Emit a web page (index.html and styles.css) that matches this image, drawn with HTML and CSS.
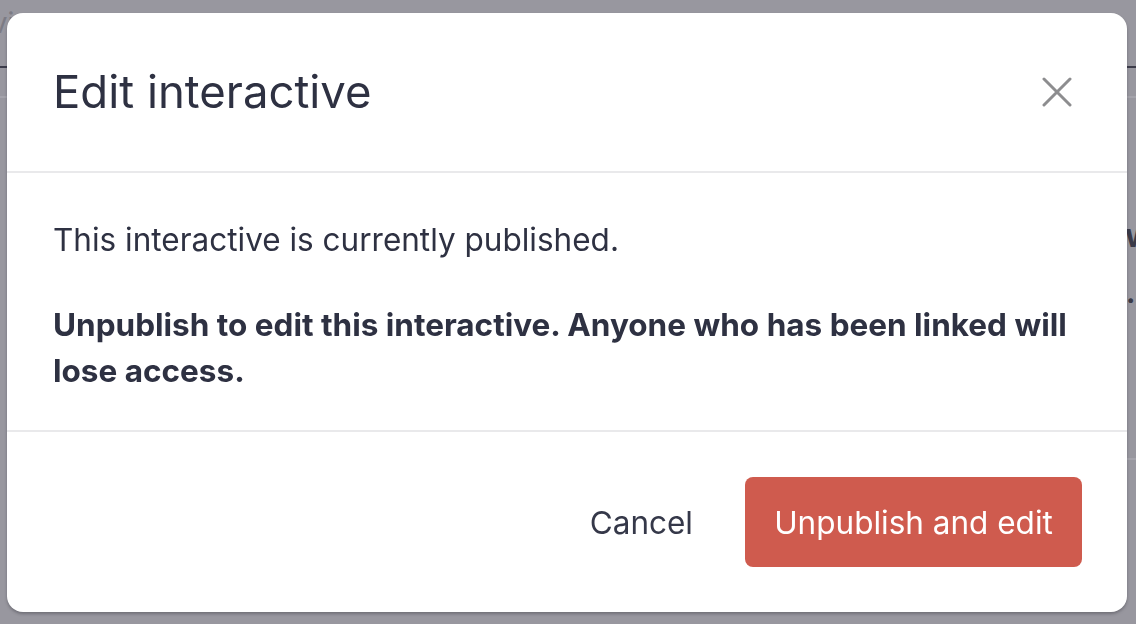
FILE: index.html
```html
<!DOCTYPE html>
<html lang="en">
<head>
<meta charset="utf-8">
<title>Edit interactive</title>
<link rel="stylesheet" href="styles.css">
</head>
<body>
<div class="page">
  <div class="topbar"><span class="crumb">Preview</span></div>
  <div class="subbar"></div>
  <div class="content">
    <div class="side-heading">w</div>
    <div class="side-dot">.</div>
    <div class="side-line"></div>
  </div>
</div>
<div class="overlay">
  <div class="modal" role="dialog" aria-labelledby="modal-title">
    <header class="modal-header">
      <h1 id="modal-title" class="modal-title">Edit interactive</h1>
      <button class="close-btn" aria-label="Close">
        <svg width="30" height="30" viewBox="0 0 30 30" aria-hidden="true">
          <path d="M2 2 L28 28 M28 2 L2 28" stroke="#8d8d8f" stroke-width="3" stroke-linecap="round" fill="none"/>
        </svg>
      </button>
    </header>
    <section class="modal-body">
      <p class="text">This interactive is currently published.</p>
      <p class="text strong">Unpublish to edit this interactive. Anyone who has been linked will lose access.</p>
    </section>
    <footer class="modal-footer">
      <button class="btn-cancel">Cancel</button>
      <button class="btn-danger">Unpublish and edit</button>
    </footer>
  </div>
</div>
</body>
</html>
```

FILE: styles.css
```css
* { box-sizing: border-box; }

html, body {
  margin: 0;
  height: 624px;
  overflow: hidden;
}

body {
  background: #98979f;
  font-family: Inter, "Noto Sans", "Liberation Sans", sans-serif;
}

.page {
  height: 100%;
  display: flex;
  flex-direction: column;
}

.topbar {
  height: 68px;
  border-bottom: 2px solid #3c3c4a;
  padding: 6px 0 0 0;
}

.crumb {
  display: inline-block;
  margin-left: -52px;
  color: #7c7b84;
  font-size: 28px;
  line-height: 34px;
}

.subbar {
  height: 30px;
  border-bottom: 2px solid #a4a3ab;
}

.content {
  flex: 1;
  display: flex;
  flex-direction: column;
}

.side-heading {
  margin: 118px 0 0 1125px;
  font-size: 32px;
  line-height: 40px;
  font-weight: 700;
  color: #3a3a48;
}

.side-dot {
  margin: 22px 0 0 1126px;
  font-size: 28px;
  line-height: 30px;
  font-weight: 700;
  color: #3a3a48;
}

.side-line {
  margin: 150px 0 0 760px;
  height: 2px;
  background: #a4a3ab;
}

.overlay {
  position: fixed;
  inset: 0;
  display: flex;
  align-items: flex-start;
  justify-content: flex-start;
  padding: 13px 9px 12px 7px;
}

.modal {
  width: 1120px;
  height: 599px;
  background: #ffffff;
  border-radius: 16px;
  box-shadow: 0 2px 3px rgba(40, 40, 50, 0.35);
  display: flex;
  flex-direction: column;
  color: #2e3142;
}

.modal-header {
  height: 160px;
  flex: none;
  display: flex;
  align-items: center;
  justify-content: space-between;
  padding: 0 55px 0 46px;
  border-bottom: 2px solid #e9e9eb;
}

.modal-title {
  margin: 0;
  font-size: 45.5px;
  font-weight: 400;
  line-height: 52px;
  color: #2e3142;
}

.close-btn {
  border: 0;
  background: none;
  padding: 0;
  width: 30px;
  height: 30px;
  display: flex;
  cursor: pointer;
}

.modal-body {
  flex: none;
  padding: 44px 46px 36px;
  display: flex;
  flex-direction: column;
  gap: 39px;
}

.text {
  margin: 0;
  font-size: 31.5px;
  line-height: 46px;
  color: #2e3142;
}

.strong {
  font-weight: 700;
}

.modal-footer {
  flex: 1;
  border-top: 2px solid #e9e9eb;
  display: flex;
  align-items: center;
  justify-content: flex-end;
  gap: 52px;
  padding: 0 45px;
}

.btn-cancel {
  border: 0;
  background: none;
  padding: 0;
  font-family: inherit;
  font-size: 31.5px;
  color: #353849;
  cursor: pointer;
}

.btn-danger {
  border: 0;
  border-radius: 8px;
  background: #cf5b4e;
  color: #ffffff;
  font-family: inherit;
  font-size: 31.5px;
  height: 90px;
  width: 337px;
  padding: 0;
  cursor: pointer;
}
```
